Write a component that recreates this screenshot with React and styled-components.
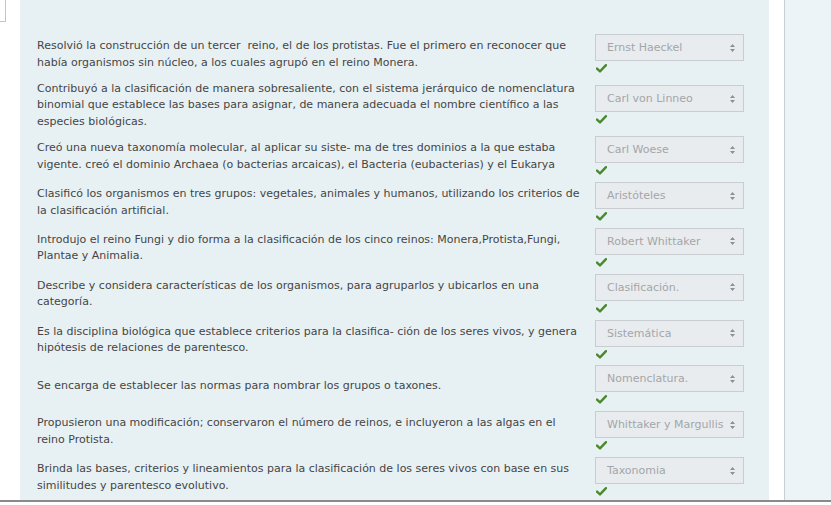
import React from 'react';
import styled, { createGlobalStyle } from 'styled-components';

const GlobalStyle = createGlobalStyle`
  html, body {
    margin: 0;
    padding: 0;
    background: #fff;
    overflow: hidden;
  }
  * { box-sizing: border-box; }
`;

const Page = styled.div`
  width: 831px;
  height: 505px;
  display: flex;
  flex-direction: column;
  font-family: "DejaVu Sans", "Liberation Sans", sans-serif;
`;

const Body = styled.div`
  flex: 0 0 500px;
  display: flex;
  overflow: hidden;
`;

const Gutter = styled.div`
  width: 20px;
  flex-shrink: 0;
`;

// little cut-off field at the top left corner
const GutterStub = styled.div`
  width: 6px;
  height: 22px;
  border-right: 1px solid #c4c4c4;
  border-bottom: 1px solid #c4c4c4;
`;

const Question = styled.div`
  width: 749px;
  flex-shrink: 0;
  background: #e7f1f4;
  padding: 34px 25px 0 17px;
  display: flex;
  flex-direction: column;
  gap: 4.85px;
`;

const Spacer = styled.div`
  width: 15px;
  flex-shrink: 0;
`;

const Sidebar = styled.div`
  flex: 1;
  background: #edf4f7;
  border-left: 1px solid #c9cfd3;
`;

const Footer = styled.div`
  flex: 1;
  border-top: 2px solid #8a8a8a;
  background: #fff;
`;

const Row = styled.div`
  display: flex;
  align-items: center;
  gap: 5px;
`;

const Prompt = styled.div`
  width: 553px;
  flex-shrink: 0;
  padding: 1px 0;
  font-size: 11px;
  line-height: 16.5px;
  color: #454545;
  white-space: nowrap;
`;

const Control = styled.div`
  width: 149px;
  height: 41px;
  display: flex;
  flex-direction: column;
`;

const Select = styled.div`
  height: 27px;
  border: 1px solid #c9cdd1;
  background: #e9ecee;
  display: flex;
  align-items: center;
  justify-content: space-between;
  padding: 0 8px 0 11px;
  font-size: 11px;
  color: #a3a6a9;
  white-space: nowrap;
`;

const Arrows = styled.svg`
  width: 5px;
  height: 8px;
  flex-shrink: 0;
`;

const Check = styled.svg`
  width: 11px;
  height: 9px;
  margin: 3px 0 0 1px;
`;

const items = [
  {
    lines: [
      'Resolvió la construcción de un tercer\u00a0 reino, el de los protistas. Fue el primero en reconocer que',
      'había organismos sin núcleo, a los cuales agrupó en el reino Monera.',
    ],
    answer: 'Ernst Haeckel',
  },
  {
    lines: [
      'Contribuyó a la clasificación de manera sobresaliente, con el sistema jerárquico de nomenclatura',
      'binomial que establece las bases para asignar, de manera adecuada el nombre científico a las',
      'especies biológicas.',
    ],
    answer: 'Carl von Linneo',
  },
  {
    lines: [
      'Creó una nueva taxonomía molecular, al aplicar su siste- ma de tres dominios a la que estaba',
      'vigente. creó el dominio Archaea (o bacterias arcaicas), el Bacteria (eubacterias) y el Eukarya',
    ],
    answer: 'Carl Woese',
  },
  {
    lines: [
      'Clasificó los organismos en tres grupos: vegetales, animales y humanos, utilizando los criterios de',
      'la clasificación artificial.',
    ],
    answer: 'Aristóteles',
  },
  {
    lines: [
      'Introdujo el reino Fungi y dio forma a la clasificación de los cinco reinos: Monera,Protista,Fungi,',
      'Plantae y Animalia.',
    ],
    answer: 'Robert Whittaker',
  },
  {
    lines: [
      'Describe y considera características de los organismos, para agruparlos y ubicarlos en una',
      'categoría.',
    ],
    answer: 'Clasificación.',
  },
  {
    lines: [
      'Es la disciplina biológica que establece criterios para la clasifica- ción de los seres vivos, y genera',
      'hipótesis de relaciones de parentesco.',
    ],
    answer: 'Sistemática',
  },
  {
    lines: ['Se encarga de establecer las normas para nombrar los grupos o taxones.'],
    answer: 'Nomenclatura.',
  },
  {
    lines: [
      'Propusieron una modificación; conservaron el número de reinos, e incluyeron a las algas en el',
      'reino Protista.',
    ],
    answer: 'Whittaker y Margullis',
  },
  {
    lines: [
      'Brinda las bases, criterios y lineamientos para la clasificación de los seres vivos con base en sus',
      'similitudes y parentesco evolutivo.',
    ],
    answer: 'Taxonomia',
  },
];

function MatchRow({ lines, answer }) {
  return (
    <Row>
      <Prompt>
        {lines.map((l, i) => (
          <React.Fragment key={i}>
            {i > 0 && <br />}
            {l}
          </React.Fragment>
        ))}
      </Prompt>
      <Control>
        <Select>
          <span>{answer}</span>
          <Arrows viewBox="0 0 5 8">
            <path d="M2.5 0 L5 3 H0 Z M2.5 8 L5 5 H0 Z" fill="#8d9093" />
          </Arrows>
        </Select>
        <Check viewBox="0 0 11 9">
          <path d="M1 4.6 L4 7.4 L10 1.2" fill="none" stroke="#4a8a2c" strokeWidth="2.4" strokeLinecap="round" strokeLinejoin="round" />
        </Check>
      </Control>
    </Row>
  );
}

export default function App() {
  return (
    <>
      <GlobalStyle />
      <Page>
        <Body>
          <Gutter>
            <GutterStub />
          </Gutter>
          <Question>
            {items.map((it, i) => (
              <MatchRow key={i} {...it} />
            ))}
          </Question>
          <Spacer />
          <Sidebar />
        </Body>
        <Footer />
      </Page>
    </>
  );
}
